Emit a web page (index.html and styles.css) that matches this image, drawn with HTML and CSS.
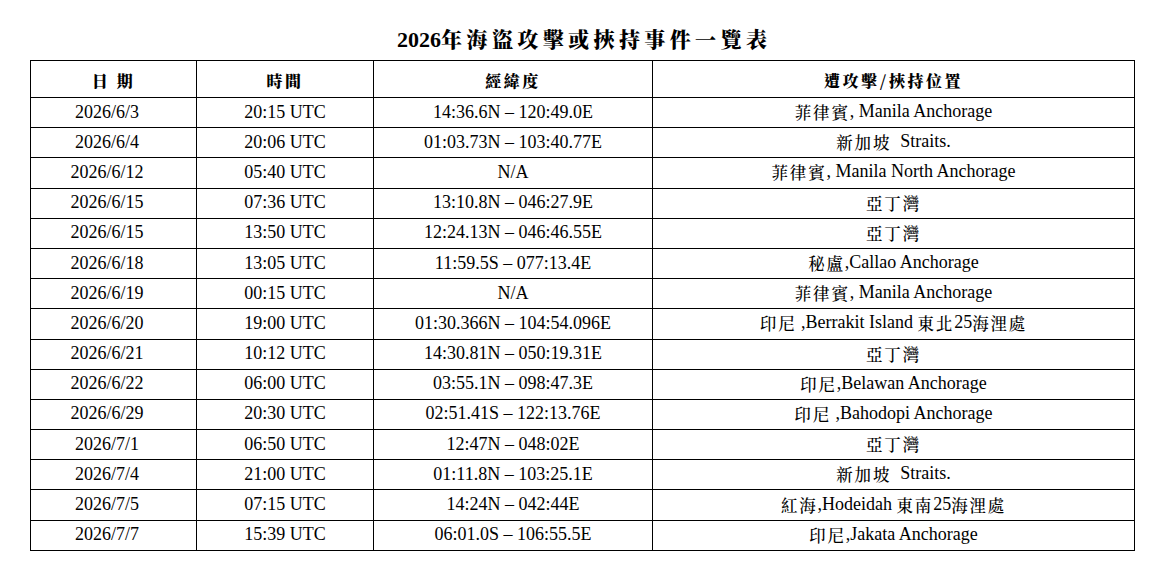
FILE: index.html
```html
<!DOCTYPE html>
<html lang="zh-Hant">
<head>
<meta charset="utf-8">
<title>2026年海盜攻擊或挾持事件一覽表</title>
<link rel="stylesheet" href="styles.css">
</head>
<body>
<div class="page">
  <h1 class="title">2026<span class="zh-title">年海盜攻擊或挾持事件一覽表</span></h1>
  <table class="events">
    <colgroup>
      <col class="c-date">
      <col class="c-time">
      <col class="c-pos">
      <col class="c-loc">
    </colgroup>
    <thead>
      <tr>
        <th>日 期</th>
        <th>時間</th>
        <th>經緯度</th>
        <th>遭攻擊/挾持位置</th>
      </tr>
    </thead>
    <tbody>
      <tr><td class="date">2026/6/3</td><td>20:15 UTC</td><td>14:36.6N – 120:49.0E</td><td><span class="zh">菲律賓</span>, Manila Anchorage</td></tr>
      <tr><td class="date">2026/6/4</td><td>20:06 UTC</td><td>01:03.73N – 103:40.77E</td><td><span class="zh">新加坡</span>&nbsp; Straits.</td></tr>
      <tr><td class="date">2026/6/12</td><td>05:40 UTC</td><td>N/A</td><td><span class="zh">菲律賓</span>, Manila North Anchorage</td></tr>
      <tr><td class="date">2026/6/15</td><td>07:36 UTC</td><td>13:10.8N – 046:27.9E</td><td><span class="zh">亞丁灣</span></td></tr>
      <tr><td class="date">2026/6/15</td><td>13:50 UTC</td><td>12:24.13N – 046:46.55E</td><td><span class="zh">亞丁灣</span></td></tr>
      <tr><td class="date">2026/6/18</td><td>13:05 UTC</td><td>11:59.5S – 077:13.4E</td><td><span class="zh">秘盧</span>,Callao Anchorage</td></tr>
      <tr><td class="date">2026/6/19</td><td>00:15 UTC</td><td>N/A</td><td><span class="zh">菲律賓</span>, Manila Anchorage</td></tr>
      <tr><td class="date">2026/6/20</td><td>19:00 UTC</td><td>01:30.366N – 104:54.096E</td><td><span class="zh">印尼</span> ,Berrakit Island <span class="zh">東北</span>25<span class="zh">海浬處</span></td></tr>
      <tr><td class="date">2026/6/21</td><td>10:12 UTC</td><td>14:30.81N – 050:19.31E</td><td><span class="zh">亞丁灣</span></td></tr>
      <tr><td class="date">2026/6/22</td><td>06:00 UTC</td><td>03:55.1N – 098:47.3E</td><td><span class="zh">印尼</span>,Belawan Anchorage</td></tr>
      <tr><td class="date">2026/6/29</td><td>20:30 UTC</td><td>02:51.41S – 122:13.76E</td><td><span class="zh">印尼</span> ,Bahodopi Anchorage</td></tr>
      <tr><td class="date">2026/7/1</td><td>06:50 UTC</td><td>12:47N – 048:02E</td><td><span class="zh">亞丁灣</span></td></tr>
      <tr><td class="date">2026/7/4</td><td>21:00 UTC</td><td>01:11.8N – 103:25.1E</td><td><span class="zh">新加坡</span>&nbsp; Straits.</td></tr>
      <tr><td class="date">2026/7/5</td><td>07:15 UTC</td><td>14:24N – 042:44E</td><td><span class="zh">紅海</span>,Hodeidah <span class="zh">東南</span>25<span class="zh">海浬處</span></td></tr>
      <tr><td class="date">2026/7/7</td><td>15:39 UTC</td><td>06:01.0S – 106:55.5E</td><td><span class="zh">印尼</span>,Jakata Anchorage</td></tr>
    </tbody>
  </table>
</div>
</body>
</html>
```

FILE: styles.css
```css
html, body {
  margin: 0;
  padding: 0;
  background: #ffffff;
}

body {
  font-family: "Liberation Serif", "Noto Serif CJK TC", "Noto Sans CJK TC", serif;
  color: #000000;
}

.page {
  width: 1104px;
  padding-left: 30px;
}

.title {
  margin: 0;
  height: 60px;
  box-sizing: border-box;
  padding-top: 24px;
  line-height: 28px;
  font-size: 22px;
  font-weight: bold;
  text-align: center;
}

.zh-title {
  font-family: "Noto Serif CJK TC", "Noto Sans CJK TC", serif;
  font-size: 21px;
  font-weight: 900;
  letter-spacing: 4.4px;
  margin-right: -4.4px;
}

.events {
  width: 1104px;
  border-collapse: collapse;
  table-layout: fixed;
}

.c-date { width: 166px; }
.c-time { width: 177px; }
.c-pos  { width: 279px; }
.c-loc  { width: 482px; }

.events th,
.events td {
  border: 1px solid #000000;
  padding: 0;
  text-align: center;
  vertical-align: middle;
}

.events th {
  height: 37px;
  padding-top: 4px;
  box-sizing: border-box;
  font-family: "Noto Serif CJK TC", "Noto Sans CJK TC", serif;
  font-size: 16px;
  font-weight: 900;
  letter-spacing: 2.5px;
  line-height: 20px;
}

.events td {
  height: 30.2px;
  font-size: 18px;
  line-height: 20px;
  padding-bottom: 2px;
  box-sizing: border-box;
}

.events td.date {
  padding-right: 13px;
}

.zh {
  font-family: "Noto Serif CJK TC", "Noto Sans CJK TC", serif;
  font-size: 16.5px;
  font-weight: 500;
  letter-spacing: 1.8px;
  vertical-align: -2px;
}
```
